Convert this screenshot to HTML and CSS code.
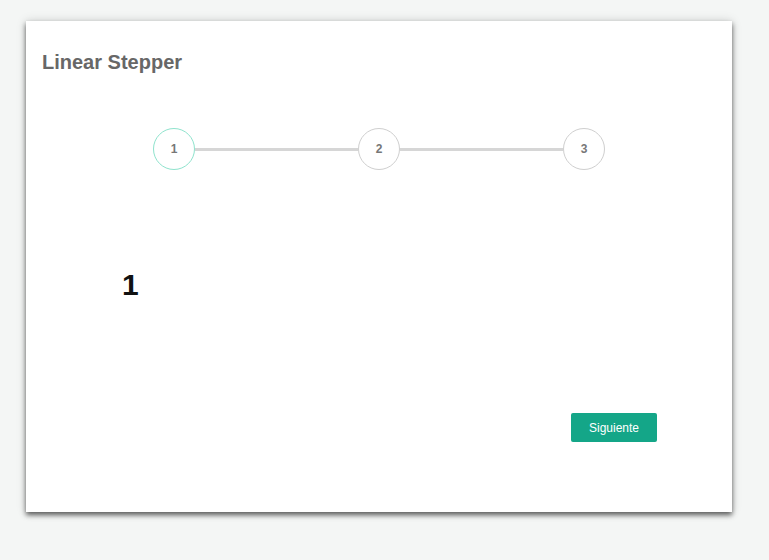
FILE: index.html
```html
<!DOCTYPE html>
<html lang="es">
<head>
<meta charset="utf-8">
<title>Linear Stepper</title>
<link rel="stylesheet" href="styles.css">
</head>
<body>
<div class="card">
  <h2 class="title">Linear Stepper</h2>
  <div class="stepper">
    <div class="step active">1</div>
    <div class="line"></div>
    <div class="step">2</div>
    <div class="line"></div>
    <div class="step">3</div>
  </div>
  <div class="content">1</div>
  <div class="actions">
    <button class="btn">Siguiente</button>
  </div>
</div>
</body>
</html>
```

FILE: styles.css
```css
html, body {
  margin: 0;
  padding: 0;
  background: #f4f6f5;
  font-family: "Liberation Sans", Arial, sans-serif;
}
body {
  padding: 21px 0 0 26px;
  min-height: 560px;
  box-sizing: border-box;
}
.card {
  width: 706px;
  height: 491px;
  background: #ffffff;
  box-shadow: 0 3px 5px rgba(0, 0, 0, 0.6), 0 0 10px rgba(0, 0, 0, 0.14);
  box-sizing: border-box;
  padding-top: 29px;
}
.title {
  margin: 0 0 0 16px;
  font-size: 20px;
  line-height: 24px;
  font-weight: bold;
  color: #676767;
}
.stepper {
  display: flex;
  align-items: center;
  justify-content: center;
  margin-top: 54px;
}
.step {
  width: 42px;
  height: 42px;
  box-sizing: border-box;
  border: 1.5px solid #cfcfcf;
  border-radius: 50%;
  display: flex;
  align-items: center;
  justify-content: center;
  font-size: 12px;
  font-weight: bold;
  color: #777777;
  flex: none;
}
.step.active {
  border-color: #8fe3cd;
}
.line {
  width: 163px;
  height: 3px;
  background: #d6d6d6;
  flex: none;
}
.content {
  margin: 98px 0 0 96px;
  font-size: 30px;
  line-height: 34px;
  font-weight: bold;
  color: #111111;
}
.actions {
  display: flex;
  justify-content: flex-end;
  padding-right: 75px;
  margin-top: 111px;
}
.btn {
  width: 86px;
  height: 29px;
  border: none;
  border-radius: 2px;
  background: #14a688;
  color: #ffffff;
  font-family: "Liberation Sans", Arial, sans-serif;
  font-size: 12px;
  padding: 0;
  cursor: pointer;
}
```
